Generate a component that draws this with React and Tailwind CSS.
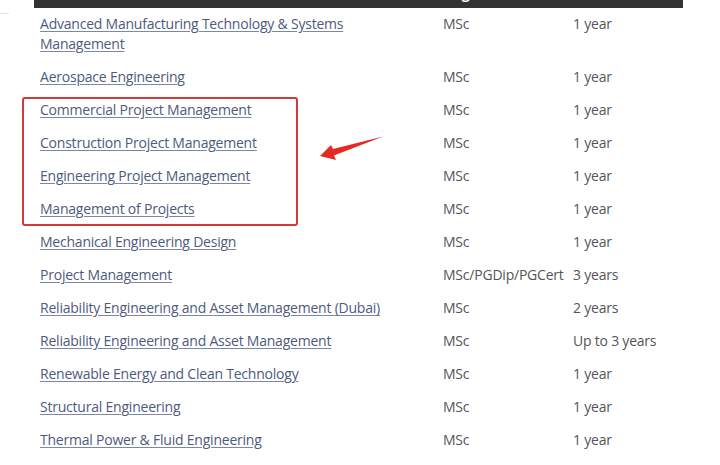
import React from "react";

const rows = [
  ["Advanced Manufacturing Technology & Systems Management", "MSc", "1 year"],
  ["Aerospace Engineering", "MSc", "1 year"],
  ["Commercial Project Management", "MSc", "1 year"],
  ["Construction Project Management", "MSc", "1 year"],
  ["Engineering Project Management", "MSc", "1 year"],
  ["Management of Projects", "MSc", "1 year"],
  ["Mechanical Engineering Design", "MSc", "1 year"],
  ["Project Management", "MSc/PGDip/PGCert", "3 years"],
  ["Reliability Engineering and Asset Management (Dubai)", "MSc", "2 years"],
  ["Reliability Engineering and Asset Management", "MSc", "Up to 3 years"],
  ["Renewable Energy and Clean Technology", "MSc", "1 year"],
  ["Structural Engineering", "MSc", "1 year"],
  ["Thermal Power & Fluid Engineering", "MSc", "1 year"],
];

export default function App() {
  return (
    <div
      className="relative w-[720px] h-[465px] overflow-hidden bg-white"
      style={{ fontFamily: '"Open Sans", sans-serif' }}
    >
      <div className="absolute left-0 top-[13px] w-[9px] h-px bg-[#e4e4e4]" />
      <div className="ml-[34px] w-[649px]">
        <div className="h-[8px] overflow-hidden bg-[#333333]">
          <div className="grid grid-cols-[403px_130px_1fr] -mt-[16px] text-white text-[14px] font-bold leading-[20px] pl-[6px]">
            <div>Course</div>
            <div>Degree</div>
            <div>Duration</div>
          </div>
        </div>
        {rows.map(([name, deg, dur], i) => (
          <div
            key={i}
            className="grid grid-cols-[403px_130px_1fr] pl-[6px] pt-[6px] pb-[7px] text-[14px] leading-[20px] tracking-[-0.22px]"
          >
            <div className="pr-[56px]">
              <a className="text-[#4e5a7e] underline underline-offset-2 decoration-[#7d86a2]">{name}</a>
            </div>
            <div className="text-[#555555]">{deg}</div>
            <div className="text-[#555555]">{dur}</div>
          </div>
        ))}
      </div>
      <div className="absolute left-[22px] top-[97px] w-[276px] h-[129px] border-2 border-[#d23a3a] rounded-[3px]" />
      <svg className="absolute left-0 top-0" width="720" height="465">
        <path d="M383 136.5 L333 149 L331 145 L320 156 L336 160 L334 155.5 Z" fill="#e52a24" />
      </svg>
    </div>
  );
}
